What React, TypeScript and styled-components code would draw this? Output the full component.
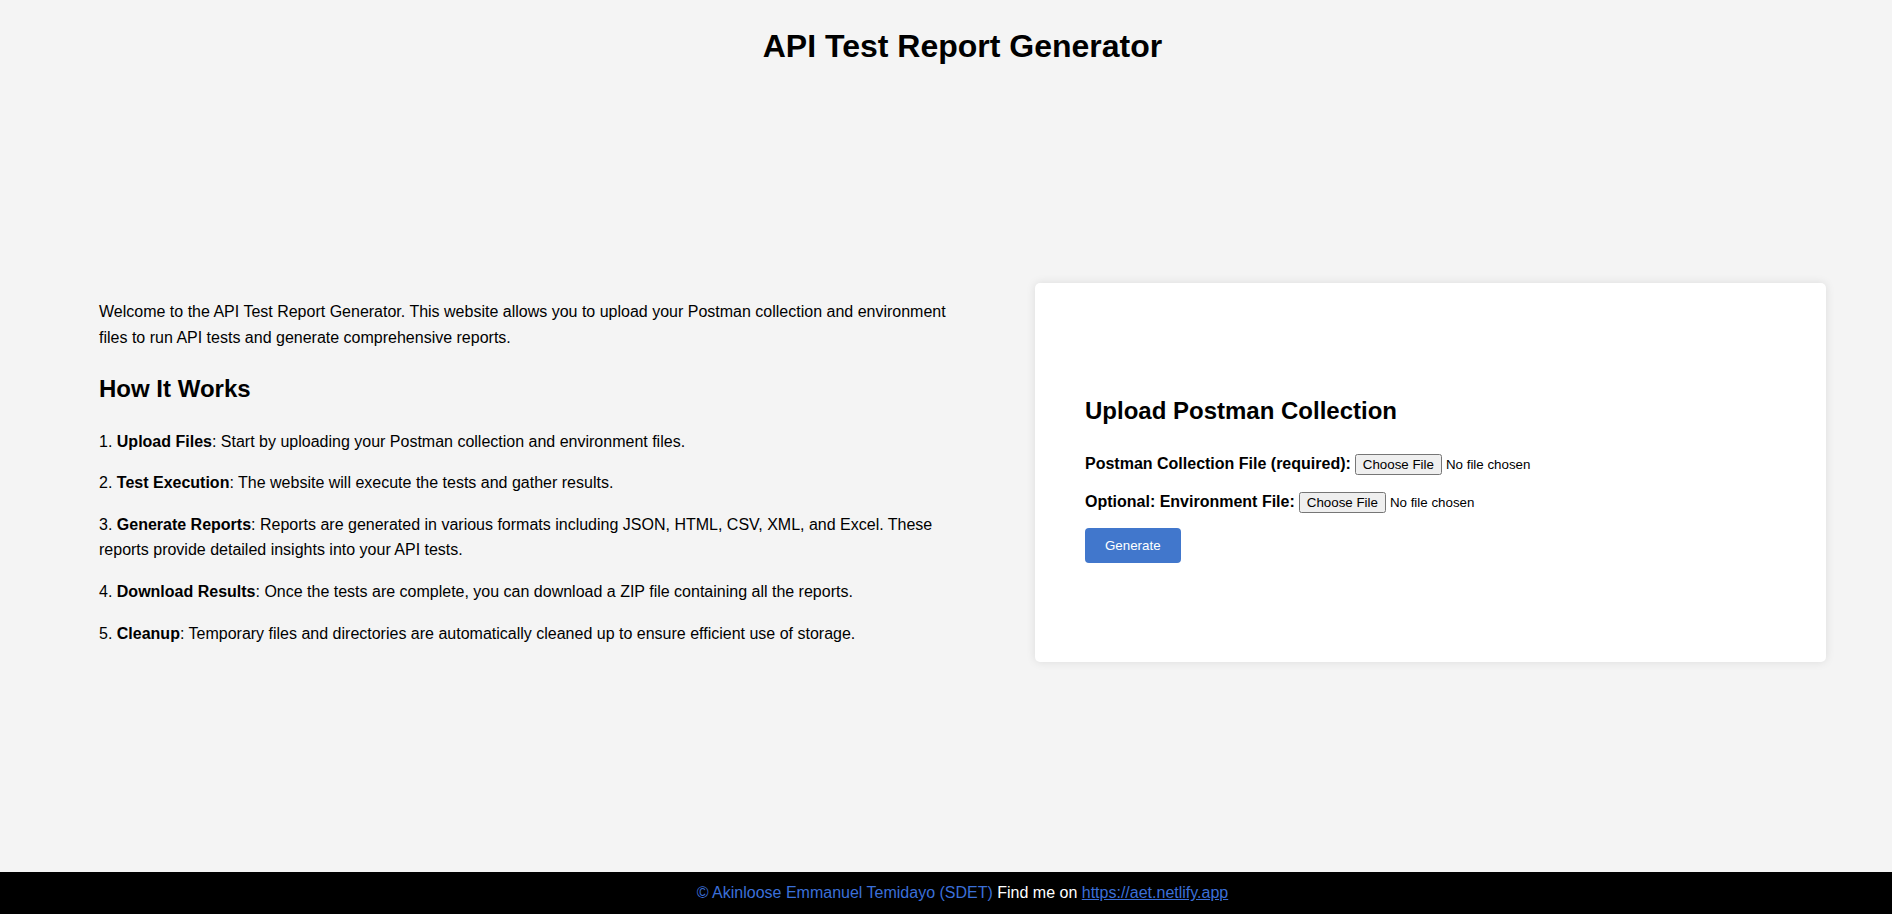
import styled, { createGlobalStyle } from "styled-components";

const GlobalStyle = createGlobalStyle`
  * { box-sizing: border-box; }
  body {
    margin: 0;
    background: #f4f4f4;
    font-family: "Liberation Sans", Arial, sans-serif;
    font-size: 16px;
    line-height: 1.6;
    color: #000;
  }
`

const Page = styled.div`
  min-height: 100vh;
  display: flex;
  flex-direction: column;
`
const Header = styled.header`
  padding-left: 33px;
  text-align: center;
`
const Title = styled.h1`
  font-size: 32px;
  margin: 21.44px 0;
`
const Main = styled.main`
  flex: 1;
  display: flex;
  align-items: center;
  padding: 0 66px 21px 99px;
`
const Row = styled.div`
  flex: 1;
  display: flex;
  gap: 70px;
`
const Intro = styled.section`
  flex: 1;
  display: flow-root;
`
const Text = styled.p`
  margin: 16px 0;
`
const SubTitle = styled.h2`
  font-size: 24px;
  margin: 19.92px 0;
`
const Card = styled.div`
  flex: 0 0 791px;
  background: #fff;
  border-radius: 5px;
  box-shadow: 0 0 10px rgba(0, 0, 0, 0.1);
  padding: 20px 50px;
  display: flex;
  flex-direction: column;
  justify-content: center;
`
const Form = styled.form`
  margin-bottom: 10px;
`
const Field = styled.div`
  margin-bottom: 13px;
`
const Label = styled.label`
  font-weight: bold;
  margin-right: 4px;
`
const FileInput = styled.input`
  font-family: "Liberation Sans", Arial, sans-serif;
  font-size: 13.33px;
`
const Button = styled.button`
  background: #4177cc;
  color: #fff;
  border: none;
  border-radius: 4px;
  padding: 10px 20px;
  font-family: "Liberation Sans", Arial, sans-serif;
  font-size: 13.33px;
  line-height: 15px;
  cursor: pointer;
`
const Footer = styled.footer`
  background: #000;
  color: #fff;
  text-align: center;
  padding: 8px 0 8px 33px;
`
const Credit = styled.span`
  color: #3b6fd8;
`
const Link = styled.a`
  color: #3b6fd8;
`

const steps = [
  { title: "Upload Files", text: "Start by uploading your Postman collection and environment files." },
  { title: "Test Execution", text: "The website will execute the tests and gather results." },
  {
    title: "Generate Reports",
    text: "Reports are generated in various formats including JSON, HTML, CSV, XML, and Excel. These reports provide detailed insights into your API tests.",
  },
  {
    title: "Download Results",
    text: "Once the tests are complete, you can download a ZIP file containing all the reports.",
  },
  {
    title: "Cleanup",
    text: "Temporary files and directories are automatically cleaned up to ensure efficient use of storage.",
  },
];

const App: React.FC = () => {
  return (
    <Page>
      <GlobalStyle />
      <Header>
        <Title>API Test Report Generator</Title>
      </Header>
      <Main>
        <Row>
          <Intro>
            <Text>
              Welcome to the API Test Report Generator. This website allows you to upload your Postman
              collection and environment files to run API tests and generate comprehensive reports.
            </Text>
            <SubTitle>How It Works</SubTitle>
            {steps.map((s, i) => (
              <Text key={s.title}>
                {i + 1}. <b>{s.title}</b>: {s.text}
              </Text>
            ))}
          </Intro>
          <Card>
            <SubTitle>Upload Postman Collection</SubTitle>
            <Form onSubmit={(e) => e.preventDefault()}>
              <Field>
                <Label htmlFor="collection">Postman Collection File (required):</Label>
                <FileInput type="file" id="collection" />
              </Field>
              <Field>
                <Label htmlFor="environment">Optional: Environment File:</Label>
                <FileInput type="file" id="environment" />
              </Field>
              <Button type="submit">Generate</Button>
            </Form>
          </Card>
        </Row>
      </Main>
      <Footer>
        <Credit>© Akinloose Emmanuel Temidayo (SDET)</Credit> Find me on{" "}
        <Link href="https://aet.netlify.app">https://aet.netlify.app</Link>
      </Footer>
    </Page>
  );
};

export default App;
